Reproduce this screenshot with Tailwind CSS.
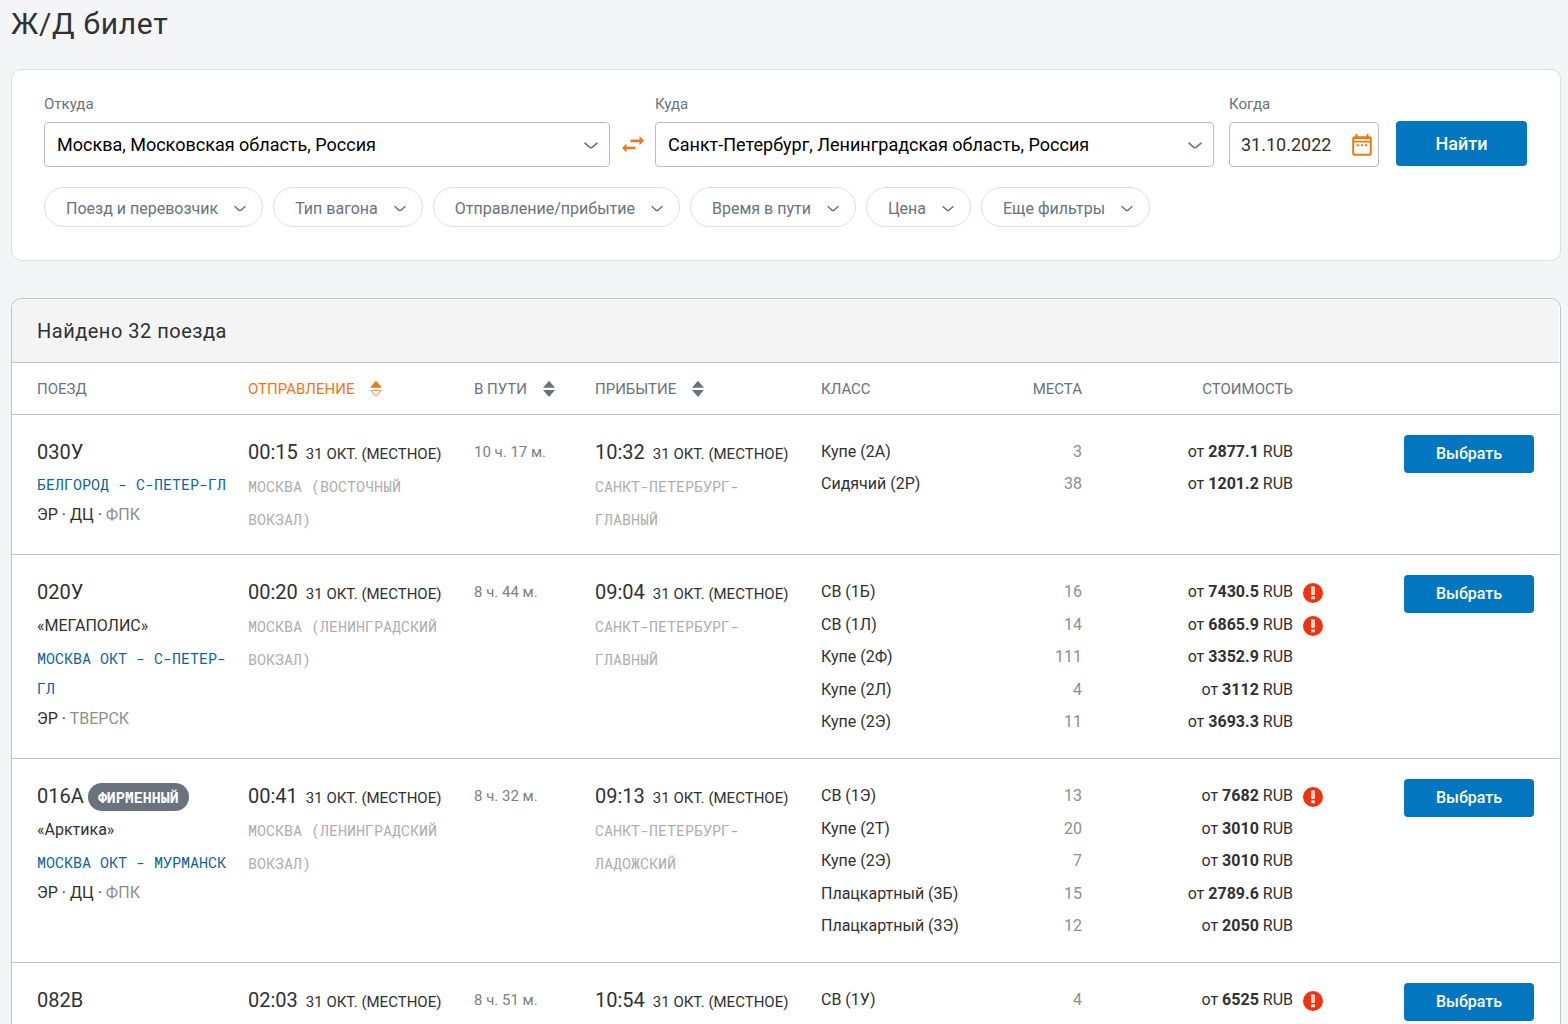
<!DOCTYPE html>
<html lang="ru">
<head>
<meta charset="utf-8">
<meta name="viewport" content="width=device-width, initial-scale=1">
<title>Ж/Д билет</title>
<script src="https://cdn.jsdelivr.net/npm/@tailwindcss/browser@4"></script>
</head>
<body class="bg-[#f4f5f7] font-['Roboto',sans-serif] text-base text-[#303132]">
<svg class="hidden" aria-hidden="true">
  <symbol id="chevron" viewBox="0 0 14 8"><path d="M1 1.2L5.800 5.300Q7 6.200 8.200 5.300L13 1.200" fill="none" stroke="currentColor" stroke-width="1.600" stroke-linecap="round" stroke-linejoin="round"/></symbol>
  <symbol id="sort" viewBox="0 0 12 18"><path d="M6 .8L12 7.800H0ZM0 10H12L6 17Z" fill="currentColor"/></symbol>
  <symbol id="sort-up" viewBox="0 0 12 18"><path d="M6 .8L12 7.800H0Z" fill="currentColor"/><path d="M1 10.400H11L6 16.300Z" fill="none" stroke="currentColor" stroke-width=".8"/></symbol>
  <symbol id="alert" viewBox="0 0 20 20"><circle cx="10" cy="10" r="10" fill="#f0320f"/><path d="M8.200 3.600H11.800V11.200L11 12H9L8.200 11.200ZM8.200 13.500H11.800V16.300H8.200Z" fill="#fff"/><path d="M9.400 5H10.600V10.800H9.400Z" fill="#f9a79a"/></symbol>
</svg>

<main class="pr-[7px] pl-[11px]">
  <h1 class="pt-[5px] text-3xl leading-[38px] tracking-wide">Ж/Д билет</h1>

  <form class="mt-[26px] rounded-[10px] border border-[#dcdedf] bg-white pt-6 pr-[33px] pb-[33px] pl-8" onsubmit="return false">
    <div class="flex items-end">
      <div class="min-w-0 grow-[566] basis-0">
        <label for="from" class="block pb-[7px] text-[15px] leading-[21px] text-[#68737d]">Откуда</label>
        <div class="relative">
          <select id="from" class="h-[45px] w-full appearance-none rounded border border-[#b6bfc7] bg-white pr-10 pl-3 text-lg text-black"><option>Москва, Московская область, Россия</option></select>
          <svg class="pointer-events-none absolute top-5 right-3 h-2 w-3.5 text-[#68737d]"><use href="#chevron"/></svg>
        </div>
      </div>
      <button type="button" aria-label="Поменять местами" class="flex h-[45px] w-[45px] shrink-0 items-center justify-center text-[#f27712]">
        <svg class="h-[18px] w-[22px]" viewBox="0 0 22 18" fill="currentColor"><path d="M8.500 3.500H17.500V0L22 4.700L17.500 9.200V6.200H8.500ZM13.500 10.700H4.500V7.500L0 12L4.500 16.600V13.300H13.500Z"/></svg>
      </button>
      <div class="min-w-0 grow-[559] basis-0">
        <label for="to" class="block pb-[7px] text-[15px] leading-[21px] text-[#68737d]">Куда</label>
        <div class="relative">
          <select id="to" class="h-[45px] w-full appearance-none rounded border border-[#b6bfc7] bg-white pr-10 pl-3 text-lg text-black"><option>Санкт-Петербург, Ленинградская область, Россия</option></select>
          <svg class="pointer-events-none absolute top-5 right-3 h-2 w-3.5 text-[#68737d]"><use href="#chevron"/></svg>
        </div>
      </div>
      <div class="ml-[15px] w-[150px] shrink-0">
        <label for="date" class="block pb-[7px] text-[15px] leading-[21px] text-[#68737d]">Когда</label>
        <div class="relative">
          <input id="date" type="text" value="31.10.2022" class="h-[45px] w-full rounded border border-[#b6bfc7] bg-white pr-10 pl-[11px] text-lg">
          <button type="button" aria-label="Открыть календарь" class="absolute top-3 right-[7px] text-[#f27712]">
            <svg class="block h-[22px] w-5" viewBox="0 0 20 22" fill="none" stroke="currentColor"><rect x="1.200" y="3.200" width="17.600" height="17.600" rx="1.500" stroke-width="2"/><path d="M4.500 0V3M15.500 0V3" stroke-width="2"/><path d="M1 7.700H19" stroke-width="1.600"/><path d="M1 4.400H19" stroke-width="1.500"/><path d="M4.800 11.200H7M9 11.200H11M13 11.200H15.200" stroke-width="2"/></svg>
          </button>
        </div>
      </div>
      <button type="submit" class="mb-px ml-[17px] h-[45px] w-[131px] shrink-0 rounded bg-[#0276bf] text-lg font-medium text-white">Найти</button>
    </div>
    <div class="mt-5 flex flex-wrap gap-2.5 text-[#68737d]">
      <button type="button" class="flex h-10 items-center gap-4 rounded-full border border-[#dedfe0] pt-[3px] pr-4 pl-[21px]">Поезд и перевозчик<svg class="h-2 w-3"><use href="#chevron"/></svg></button>
      <button type="button" class="flex h-10 items-center gap-4 rounded-full border border-[#dedfe0] pt-[3px] pr-4 pl-[21px]">Тип вагона<svg class="h-2 w-3"><use href="#chevron"/></svg></button>
      <button type="button" class="flex h-10 items-center gap-4 rounded-full border border-[#dedfe0] pt-[3px] pr-4 pl-[21px]">Отправление/прибытие<svg class="h-2 w-3"><use href="#chevron"/></svg></button>
      <button type="button" class="flex h-10 items-center gap-4 rounded-full border border-[#dedfe0] pt-[3px] pr-4 pl-[21px]">Время в пути<svg class="h-2 w-3"><use href="#chevron"/></svg></button>
      <button type="button" class="flex h-10 items-center gap-4 rounded-full border border-[#dedfe0] pt-[3px] pr-4 pl-[21px]">Цена<svg class="h-2 w-3"><use href="#chevron"/></svg></button>
      <button type="button" class="flex h-10 items-center gap-4 rounded-full border border-[#dedfe0] pt-[3px] pr-4 pl-[21px]">Еще фильтры<svg class="h-2 w-3"><use href="#chevron"/></svg></button>
    </div>
  </form>

  <section class="mt-[37px] overflow-x-auto rounded-t-[10px] border border-b-0 border-[#c1c4c6] bg-white pr-px">
    <h2 class="mt-px border-b border-[#c1c4c6] bg-[#f4f4f4] pl-[25px] text-xl leading-[62px] tracking-wide">Найдено 32 поезда</h2>
    <table class="w-full table-fixed text-left">
      <colgroup>
        <col class="w-[236px]"><col class="w-[226px]"><col class="w-[121px]"><col class="w-[226px]"><col class="w-[145px]"><col class="w-[116px]"><col class="w-[211px]"><col class="w-[266px]">
      </colgroup>
      <thead class="text-[15px] text-[#68737d]">
        <tr class="h-[51px] border-b border-[#c1c4c6]">
          <th class="pt-0.5 pl-[25px] font-normal">ПОЕЗД</th>
          <th class="pt-0.5 font-normal text-[#f27712]"><button type="button" class="flex items-center gap-4">ОТПРАВЛЕНИЕ<svg class="h-[18px] w-3"><use href="#sort-up"/></svg></button></th>
          <th class="pt-0.5 font-normal"><button type="button" class="flex items-center gap-4">В ПУТИ<svg class="h-[18px] w-3"><use href="#sort"/></svg></button></th>
          <th class="pt-0.5 font-normal"><button type="button" class="flex items-center gap-4">ПРИБЫТИЕ<svg class="h-[18px] w-3"><use href="#sort"/></svg></button></th>
          <th class="pt-0.5 font-normal">КЛАСС</th>
          <th class="pt-0.5 text-right font-normal">МЕСТА</th>
          <th class="pt-0.5 text-right font-normal">СТОИМОСТЬ</th>
          <td></td>
        </tr>
      </thead>
      <tbody class="align-top">
        <tr class="border-b border-[#c1c4c6]">
          <td class="pt-5 pr-4 pb-6 pl-[25px]">
            <div class="text-xl leading-[34px]">030У</div>
            <a href="#" class="block font-['Roboto_Mono','DejaVu_Sans_Mono',monospace] text-[15px] leading-[30px] text-[#0a639c]">БЕЛГОРОД - С-ПЕТЕР-ГЛ</a>
            <div class="pt-px leading-[30px]">ЭР · ДЦ · <span class="text-[#8e8e8e]">ФПК</span></div>
          </td>
          <td class="pt-5 pr-6">
            <div class="pt-0.5 text-[15px] leading-[31px] whitespace-nowrap"><span class="mr-2 text-xl leading-[31px]">00:15</span>31 ОКТ. (МЕСТНОЕ)</div>
            <div class="font-['Roboto_Mono','DejaVu_Sans_Mono',monospace] text-[15px] leading-[33px] text-[#adadad]">МОСКВА (ВОСТОЧНЫЙ ВОКЗАЛ)</div>
          </td>
          <td class="pt-5 text-[15px] leading-[34px] text-[#7d7f81]">10 ч. 17 м.</td>
          <td class="pt-5 pr-6">
            <div class="pt-0.5 text-[15px] leading-[31px] whitespace-nowrap"><span class="mr-2 text-xl leading-[31px]">10:32</span>31 ОКТ. (МЕСТНОЕ)</div>
            <div class="font-['Roboto_Mono','DejaVu_Sans_Mono',monospace] text-[15px] leading-[33px] text-[#adadad]">САНКТ-ПЕТЕРБУРГ-ГЛАВНЫЙ</div>
          </td>
          <td class="pt-[21px] pb-4"><ul class="leading-8 whitespace-nowrap"><li>Купе (2А)</li><li>Сидячий (2Р)</li></ul></td>
          <td class="pt-[21px] pb-4"><ul class="text-right leading-8 text-[#8e8e8e]"><li>3</li><li>38</li></ul></td>
          <td class="pt-[21px] pb-4"><ul class="text-right leading-8"><li>от <b class="font-bold">2877.1</b> RUB</li><li>от <b class="font-bold">1201.2</b> RUB</li></ul></td>
          <td class="pt-5 pr-[25px] text-right"><button type="button" class="h-[38px] w-[130px] rounded bg-[#0276bf] font-medium text-white">Выбрать</button></td>
        </tr>
        <tr class="border-b border-[#c1c4c6]">
          <td class="pt-5 pr-4 pb-6 pl-[25px]">
            <div class="text-xl leading-[34px]">020У</div>
            <div class="leading-[34px]">«МЕГАПОЛИС»</div>
            <a href="#" class="block font-['Roboto_Mono','DejaVu_Sans_Mono',monospace] text-[15px] leading-[30px] text-[#0a639c]">МОСКВА ОКТ - С-ПЕТЕР-ГЛ</a>
            <div class="pt-px leading-[30px]">ЭР · <span class="text-[#8e8e8e]">ТВЕРСК</span></div>
          </td>
          <td class="pt-5 pr-6">
            <div class="pt-0.5 text-[15px] leading-[31px] whitespace-nowrap"><span class="mr-2 text-xl leading-[31px]">00:20</span>31 ОКТ. (МЕСТНОЕ)</div>
            <div class="font-['Roboto_Mono','DejaVu_Sans_Mono',monospace] text-[15px] leading-[33px] text-[#adadad]">МОСКВА (ЛЕНИНГРАДСКИЙ ВОКЗАЛ)</div>
          </td>
          <td class="pt-5 text-[15px] leading-[34px] text-[#7d7f81]">8 ч. 44 м.</td>
          <td class="pt-5 pr-6">
            <div class="pt-0.5 text-[15px] leading-[31px] whitespace-nowrap"><span class="mr-2 text-xl leading-[31px]">09:04</span>31 ОКТ. (МЕСТНОЕ)</div>
            <div class="font-['Roboto_Mono','DejaVu_Sans_Mono',monospace] text-[15px] leading-[33px] text-[#adadad]">САНКТ-ПЕТЕРБУРГ-ГЛАВНЫЙ</div>
          </td>
          <td class="pt-[21px] pb-4"><ul class="leading-8 whitespace-nowrap"><li class="odd:mb-px">СВ (1Б)</li><li>СВ (1Л)</li><li class="odd:mb-px">Купе (2Ф)</li><li>Купе (2Л)</li><li>Купе (2Э)</li></ul></td>
          <td class="pt-[21px] pb-4"><ul class="text-right leading-8 text-[#8e8e8e]"><li class="odd:mb-px">16</li><li>14</li><li class="odd:mb-px">111</li><li>4</li><li>11</li></ul></td>
          <td class="pt-[21px] pb-4"><ul class="text-right leading-8"><li class="relative odd:mb-px">от <b class="font-bold">7430.5</b> RUB<svg class="absolute top-[7px] left-full ml-2.5 size-5"><use href="#alert"/></svg></li><li class="relative">от <b class="font-bold">6865.9</b> RUB<svg class="absolute top-[7px] left-full ml-2.5 size-5"><use href="#alert"/></svg></li><li class="odd:mb-px">от <b class="font-bold">3352.9</b> RUB</li><li>от <b class="font-bold">3112</b> RUB</li><li>от <b class="font-bold">3693.3</b> RUB</li></ul></td>
          <td class="pt-5 pr-[25px] text-right"><button type="button" class="h-[38px] w-[130px] rounded bg-[#0276bf] font-medium text-white">Выбрать</button></td>
        </tr>
        <tr class="border-b border-[#c1c4c6]">
          <td class="pt-5 pr-4 pb-6 pl-[25px]">
            <div class="flex items-center gap-1 text-xl leading-[34px]">016А<span class="mt-0.5 rounded-full bg-[#68737d] px-2.5 font-['Roboto_Mono','DejaVu_Sans_Mono',monospace] text-[15px] leading-7 font-bold text-white">ФИРМЕННЫЙ</span></div>
            <div class="leading-[34px]">«Арктика»</div>
            <a href="#" class="block font-['Roboto_Mono','DejaVu_Sans_Mono',monospace] text-[15px] leading-[30px] text-[#0a639c]">МОСКВА ОКТ - МУРМАНСК</a>
            <div class="pt-px leading-[30px]">ЭР · ДЦ · <span class="text-[#8e8e8e]">ФПК</span></div>
          </td>
          <td class="pt-5 pr-6">
            <div class="pt-0.5 text-[15px] leading-[31px] whitespace-nowrap"><span class="mr-2 text-xl leading-[31px]">00:41</span>31 ОКТ. (МЕСТНОЕ)</div>
            <div class="font-['Roboto_Mono','DejaVu_Sans_Mono',monospace] text-[15px] leading-[33px] text-[#adadad]">МОСКВА (ЛЕНИНГРАДСКИЙ ВОКЗАЛ)</div>
          </td>
          <td class="pt-5 text-[15px] leading-[34px] text-[#7d7f81]">8 ч. 32 м.</td>
          <td class="pt-5 pr-6">
            <div class="pt-0.5 text-[15px] leading-[31px] whitespace-nowrap"><span class="mr-2 text-xl leading-[31px]">09:13</span>31 ОКТ. (МЕСТНОЕ)</div>
            <div class="font-['Roboto_Mono','DejaVu_Sans_Mono',monospace] text-[15px] leading-[33px] text-[#adadad]">САНКТ-ПЕТЕРБУРГ-ЛАДОЖСКИЙ</div>
          </td>
          <td class="pt-[21px] pb-4"><ul class="leading-8 whitespace-nowrap"><li class="odd:mb-px">СВ (1Э)</li><li>Купе (2Т)</li><li class="odd:mb-px">Купе (2Э)</li><li>Плацкартный (3Б)</li><li>Плацкартный (3Э)</li></ul></td>
          <td class="pt-[21px] pb-4"><ul class="text-right leading-8 text-[#8e8e8e]"><li class="odd:mb-px">13</li><li>20</li><li class="odd:mb-px">7</li><li>15</li><li>12</li></ul></td>
          <td class="pt-[21px] pb-[19px]"><ul class="text-right leading-8"><li class="relative odd:mb-px">от <b class="font-bold">7682</b> RUB<svg class="absolute top-[7px] left-full ml-2.5 size-5"><use href="#alert"/></svg></li><li>от <b class="font-bold">3010</b> RUB</li><li class="odd:mb-px">от <b class="font-bold">3010</b> RUB</li><li>от <b class="font-bold">2789.6</b> RUB</li><li class="odd:mb-px">от <b class="font-bold">2050</b> RUB</li></ul></td>
          <td class="pt-5 pr-[25px] text-right"><button type="button" class="h-[38px] w-[130px] rounded bg-[#0276bf] font-medium text-white">Выбрать</button></td>
        </tr>
        <tr>
          <td class="pt-5 pr-4 pb-6 pl-[25px]"><div class="text-xl leading-[34px]">082В</div></td>
          <td class="pt-5 pr-6"><div class="pt-0.5 text-[15px] leading-[31px] whitespace-nowrap"><span class="mr-2 text-xl leading-[31px]">02:03</span>31 ОКТ. (МЕСТНОЕ)</div></td>
          <td class="pt-5 text-[15px] leading-[34px] text-[#7d7f81]">8 ч. 51 м.</td>
          <td class="pt-5 pr-6"><div class="pt-0.5 text-[15px] leading-[31px] whitespace-nowrap"><span class="mr-2 text-xl leading-[31px]">10:54</span>31 ОКТ. (МЕСТНОЕ)</div></td>
          <td class="pt-[21px]"><ul class="leading-8 whitespace-nowrap"><li>СВ (1У)</li></ul></td>
          <td class="pt-[21px]"><ul class="text-right leading-8 text-[#8e8e8e]"><li>4</li></ul></td>
          <td class="pt-[21px]"><ul class="text-right leading-8"><li class="relative">от <b class="font-bold">6525</b> RUB<svg class="absolute top-[7px] left-full ml-2.5 size-5"><use href="#alert"/></svg></li></ul></td>
          <td class="pt-5 pr-[25px] text-right"><button type="button" class="h-[38px] w-[130px] rounded bg-[#0276bf] font-medium text-white">Выбрать</button></td>
        </tr>
      </tbody>
    </table>
  </section>
</main>
</body>
</html>
